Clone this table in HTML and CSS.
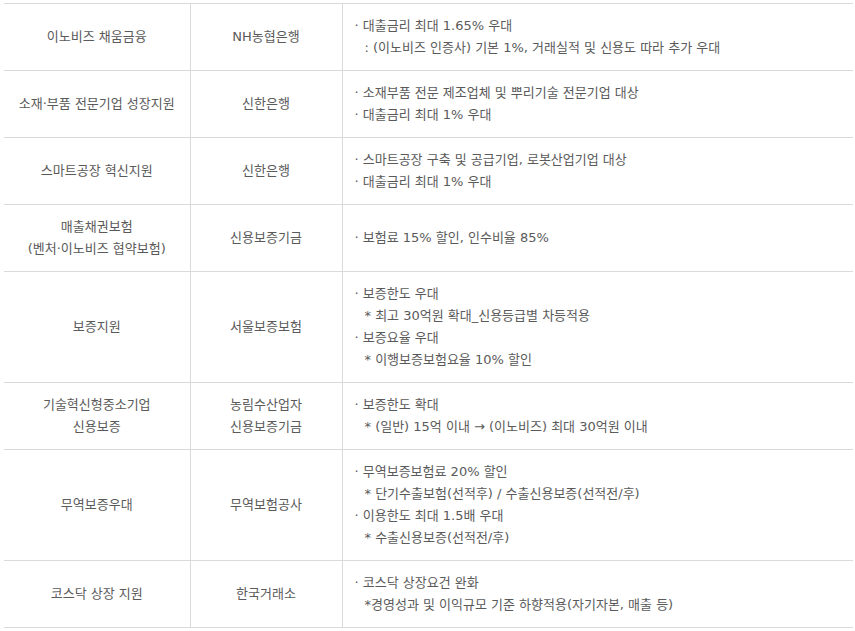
FILE: index.html
```html
<!DOCTYPE html>
<html lang="ko">
<head>
<meta charset="utf-8">
<link rel="stylesheet" href="styles.css">
</head>
<body>
<table class="benefits">
  <colgroup>
    <col class="c-name">
    <col class="c-org">
    <col class="c-desc">
  </colgroup>
  <tbody>
    <tr>
      <td class="name">이노비즈 채움금융</td>
      <td class="org">NH농협은행</td>
      <td class="desc">
        <p>· 대출금리 최대 1.65% 우대</p>
        <p class="sub">: (이노비즈 인증사) 기본 1%, 거래실적 및 신용도 따라 추가 우대</p>
      </td>
    </tr>
    <tr>
      <td class="name">소재·부품 전문기업 성장지원</td>
      <td class="org">신한은행</td>
      <td class="desc">
        <p>· 소재부품 전문 제조업체 및 뿌리기술 전문기업 대상</p>
        <p>· 대출금리 최대 1% 우대</p>
      </td>
    </tr>
    <tr>
      <td class="name">스마트공장 혁신지원</td>
      <td class="org">신한은행</td>
      <td class="desc">
        <p>· 스마트공장 구축 및 공급기업, 로봇산업기업 대상</p>
        <p>· 대출금리 최대 1% 우대</p>
      </td>
    </tr>
    <tr>
      <td class="name">매출채권보험<br>(벤처·이노비즈 협약보험)</td>
      <td class="org">신용보증기금</td>
      <td class="desc">
        <p>· 보험료 15% 할인, 인수비율 85%</p>
      </td>
    </tr>
    <tr>
      <td class="name">보증지원</td>
      <td class="org">서울보증보험</td>
      <td class="desc">
        <p>· 보증한도 우대</p>
        <p class="sub">* 최고 30억원 확대_신용등급별 차등적용</p>
        <p>· 보증요율 우대</p>
        <p class="sub">* 이행보증보험요율 10% 할인</p>
      </td>
    </tr>
    <tr>
      <td class="name">기술혁신형중소기업<br>신용보증</td>
      <td class="org">농림수산업자<br>신용보증기금</td>
      <td class="desc">
        <p>· 보증한도 확대</p>
        <p class="sub">* (일반) 15억 이내 → (이노비즈) 최대 30억원 이내</p>
      </td>
    </tr>
    <tr>
      <td class="name">무역보증우대</td>
      <td class="org">무역보험공사</td>
      <td class="desc">
        <p>· 무역보증보험료 20% 할인</p>
        <p class="sub">* 단기수출보험(선적후) / 수출신용보증(선적전/후)</p>
        <p>· 이용한도 최대 1.5배 우대</p>
        <p class="sub">* 수출신용보증(선적전/후)</p>
      </td>
    </tr>
    <tr>
      <td class="name">코스닥 상장 지원</td>
      <td class="org">한국거래소</td>
      <td class="desc">
        <p>· 코스닥 상장요건 완화</p>
        <p class="sub">*경영성과 및 이익규모 기준 하향적용(자기자본, 매출 등)</p>
      </td>
    </tr>
  </tbody>
</table>
</body>
</html>
```

FILE: styles.css
```css
html, body {
  margin: 0;
  padding: 0;
  background: #fff;
}

body {
  font-family: "DejaVu Sans", "Noto Sans CJK KR", sans-serif;
  font-size: 13px;
  color: #5a5a5a;
}

.benefits {
  border-collapse: collapse;
  table-layout: fixed;
  width: 849px;
  margin: 3px 0 0 4px;
}

.c-name { width: 186px; }
.c-org { width: 152px; }
.c-desc { width: 511px; }

.benefits td {
  border-top: 1px solid #dadada;
  border-bottom: 1px solid #dadada;
  border-left: 1px solid #dadada;
  padding: 11px 12px;
  line-height: 22px;
  vertical-align: middle;
}

.benefits td:first-child {
  border-left: none;
}

.name, .org {
  text-align: center;
}

.desc p {
  margin: 0;
  white-space: pre;
}

.desc .sub {
  padding-left: 10px;
}
```
